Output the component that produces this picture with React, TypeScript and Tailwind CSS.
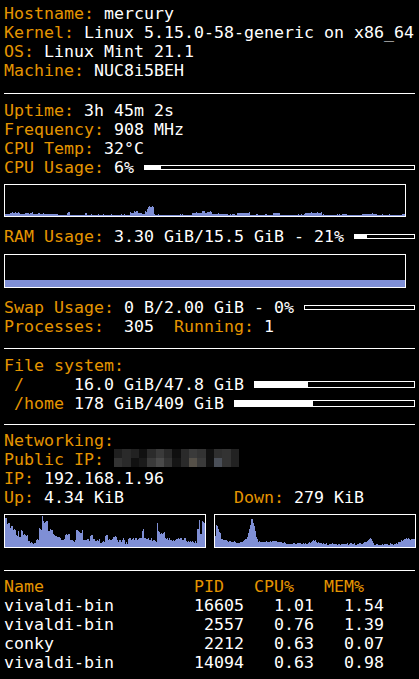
import React from "react";

const orange = "text-[#e59500]";
const graphBlue = "#7f8fd5";

type Pt = [number, number];

// per-pixel heights from hand-read keypoints (x in screen px)
function series(points: Pt[], left: number, width: number, linear: boolean, jitter: number, seed: number) {
  const out: number[] = [];
  for (let i = 0; i < width; i++) {
    const x = i + left;
    let h = points[0][1];
    for (let k = 0; k < points.length; k++) {
      if (points[k][0] <= x) {
        const next = points[k + 1];
        if (linear && next) {
          const [x0, h0] = points[k];
          const [x1, h1] = next;
          h = h0 + ((h1 - h0) * (x - x0)) / (x1 - x0);
        } else {
          h = points[k][1];
        }
      }
    }
    const n = Math.sin((i + seed) * 12.9898) * 43758.5453;
    const r = n - Math.floor(n);
    out.push(Math.max(1, Math.round(h + (r - 0.5) * jitter)));
  }
  return out;
}

function Graph({ data, w, h, className = "" }: { data: number[]; w: number; h: number; className?: string }) {
  let d = `M0 ${h}`;
  data.forEach((v, x) => {
    const y = h - Math.min(v, h);
    d += ` L${x} ${y} L${x + 1} ${y}`;
  });
  d += ` L${w} ${h} Z`;
  return (
    <div className={`border border-white ${className}`}>
      <svg width={w} height={h} viewBox={`0 0 ${w} ${h}`} shapeRendering="crispEdges" className="block">
        <path d={d} fill={graphBlue} />
      </svg>
    </div>
  );
}

function Bar({ pct, h }: { pct: number; h: string }) {
  return (
    <div className={`flex-1 border border-white ${h}`}>
      <div className="h-full bg-white" style={{ width: `${pct}%` }} />
    </div>
  );
}

function Line({ label, value }: { label: string; value: string }) {
  return (
    <div className="whitespace-pre">
      <span className={orange}>{label}</span>
      {value}
    </div>
  );
}

function Sep({ className }: { className: string }) {
  return <div className={`h-px bg-white ${className}`} />;
}

const cpuPts: Pt[] = [
  [5, 2], [10, 3], [17, 3.5], [20, 2], [25, 3], [33, 2], [58, 1], [67, 4], [70, 1], [85, 3], [87, 1],
  [130, 3], [134, 5], [138, 3], [142, 2], [145, 5], [147, 7], [148, 9], [152, 10], [154, 3], [155, 1],
  [167, 1], [192, 3], [202, 5], [205, 3], [207, 4], [212, 2], [228, 1.5], [237, 3], [250, 1],
  [273, 3], [280, 1], [297, 1.5], [305, 3], [322, 1], [342, 2], [347, 1], [362, 2], [377, 1], [402, 2],
];

const upPts: Pt[] = [
  [5, 30], [7, 23], [10, 20], [13, 17], [16, 12], [18, 15], [19, 10], [21, 17], [23, 13], [26, 12],
  [28, 5], [33, 3], [36, 7], [39, 18], [42, 30], [43, 25], [46, 27], [48, 17], [51, 17], [53, 12],
  [57, 11], [60, 8], [65, 13], [70, 8], [73, 6], [76, 18], [78, 15], [82, 18], [83, 7], [87, 7],
  [90, 11], [93, 7], [100, 5], [105, 11], [108, 8], [113, 10], [117, 6], [122, 8], [125, 4], [128, 8],
  [133, 8], [142, 17], [144, 8], [152, 6], [157, 25], [158, 15], [160, 14], [165, 8], [170, 6],
  [173, 7], [177, 8], [182, 8], [186, 6], [192, 5], [197, 18], [199, 28], [200, 13], [202, 25],
];

const downPts: Pt[] = [
  [215, 11], [216, 22], [218, 18], [220, 13], [221, 8], [223, 7], [228, 6], [240, 4], [245, 7],
  [247, 10], [250, 22], [251.5, 31], [253, 25], [255, 17], [256, 10], [258, 5], [261, 5], [276, 6],
  [285, 4], [291, 3], [308, 4], [311, 5], [315, 7], [317, 5], [320, 4], [323, 3], [345, 3], [361, 3],
  [365, 5], [368, 7], [370, 9], [373, 4], [375, 2], [390, 3], [395, 3], [406, 9], [410, 7], [414, 8],
];

const blur = [
  ["#1f1f1f", "#2a2a2a", "#222222", "#111111", "#2b2b2b", "#3a3a3a", "#2a2a2a", "#0f0f0f", "#2a2a2a", "#3a3a3a", "#333333", "#111111", "#2f2f2f", "#333333", "#222222"],
  ["#333333", "#2a2a2a", "#111111", "#1a1a1a", "#3a3a3a", "#4a4a4a", "#333333", "#151515", "#2a2a2a", "#555048", "#3a3a3a", "#111111", "#4a4f58", "#333333", "#222222"],
];

const procs = [
  ["vivaldi-bin", "16605", "1.01", "1.54"],
  ["vivaldi-bin", "2557", "0.76", "1.39"],
  ["conky", "2212", "0.63", "0.07"],
  ["vivaldi-bin", "14094", "0.63", "0.98"],
];

export default function App() {
  const cpu = series(cpuPts, 5, 400, false, 1.2, 3);
  const up = series(upPts, 5, 200, false, 3, 7);
  const down = series(downPts, 215, 200, true, 1.5, 11);

  return (
    <div className="h-[679px] w-[419px] bg-black px-[4px] pt-[4px] text-white font-['DejaVu_Sans_Mono',monospace] text-[16.61px] leading-[19px]">
      {/* system */}
      <Line label="Hostname: " value="mercury" />
      <Line label="Kernel: " value="Linux 5.15.0-58-generic on x86_64" />
      <Line label="OS: " value="Linux Mint 21.1" />
      <Line label="Machine: " value="NUC8i5BEH" />

      <Sep className="mt-[13px] mb-[7px]" />

      {/* cpu / mem */}
      <Line label="Uptime: " value="3h 45m 2s" />
      <Line label="Frequency: " value="908 MHz" />
      <Line label="CPU Temp: " value="32°C" />
      <div className="flex items-center gap-[10px]">
        <Line label="CPU Usage: " value="6%" />
        <Bar pct={6} h="h-[5px]" />
      </div>
      <Graph data={cpu} w={400} h={31} className="mt-[7px] w-[402px]" />

      <div className="mt-[10px] flex items-center gap-[10px]">
        <Line label="RAM Usage: " value="3.30 GiB/15.5 GiB - 21%" />
        <Bar pct={21} h="h-[5px]" />
      </div>
      <div className="mt-[8px] flex h-[34px] w-[402px] flex-col justify-end border border-white">
        <div className="h-[7px]" style={{ background: graphBlue }} />
      </div>

      <div className="mt-[10px] flex items-center gap-[10px]">
        <Line label="Swap Usage: " value="0 B/2.00 GiB - 0%" />
        <Bar pct={0} h="h-[5px]" />
      </div>
      <div className="whitespace-pre">
        <span className={orange}>Processes:</span>
        {"  305  "}
        <span className={orange}>Running:</span>
        {" 1"}
      </div>

      <Sep className="mt-[12px] mb-[7px]" />

      {/* disks */}
      <div className={orange}>File system:</div>
      <div className="flex items-center gap-[10px]">
        <Line label=" /     " value="16.0 GiB/47.8 GiB" />
        <Bar pct={33.5} h="h-[7px]" />
      </div>
      <div className="flex items-center gap-[10px]">
        <Line label=" /home " value="178 GiB/409 GiB" />
        <Bar pct={43.5} h="h-[7px]" />
      </div>

      <Sep className="mt-[11px] mb-[6px]" />

      {/* network */}
      <div className={orange}>Networking:</div>
      <div className="flex items-start whitespace-pre">
        <span className={orange}>Public IP: </span>
        <div className="mt-[-1px] grid w-[125px] grid-cols-[repeat(15,1fr)]">
          {blur.flat().map((c, i) => (
            <div key={i} className="h-[9px]" style={{ background: c }} />
          ))}
        </div>
      </div>
      <Line label="IP: " value="192.168.1.96" />
      <div className="flex whitespace-pre">
        <div className="w-[230px]">
          <span className={orange}>Up: </span>4.34 KiB
        </div>
        <div>
          <span className={orange}>Down: </span>279 KiB
        </div>
      </div>
      <div className="mt-[7px] flex gap-[8px]">
        <Graph data={up} w={200} h={32} />
        <Graph data={down} w={200} h={32} />
      </div>

      <Sep className="mt-[22px] mb-[6px]" />

      {/* processes */}
      <div className="grid grid-cols-[190px_60px_70px_70px]">
        <div className={orange}>Name</div>
        <div className={orange}>PID</div>
        <div className={orange}>CPU%</div>
        <div className={orange}>MEM%</div>
        {procs.map((p) => (
          <React.Fragment key={p[1]}>
            <div>{p[0]}</div>
            <div className="pr-[10px] text-right">{p[1]}</div>
            <div className="pr-[10px] text-right">{p[2]}</div>
            <div className="pr-[10px] text-right">{p[3]}</div>
          </React.Fragment>
        ))}
      </div>
    </div>
  );
}
